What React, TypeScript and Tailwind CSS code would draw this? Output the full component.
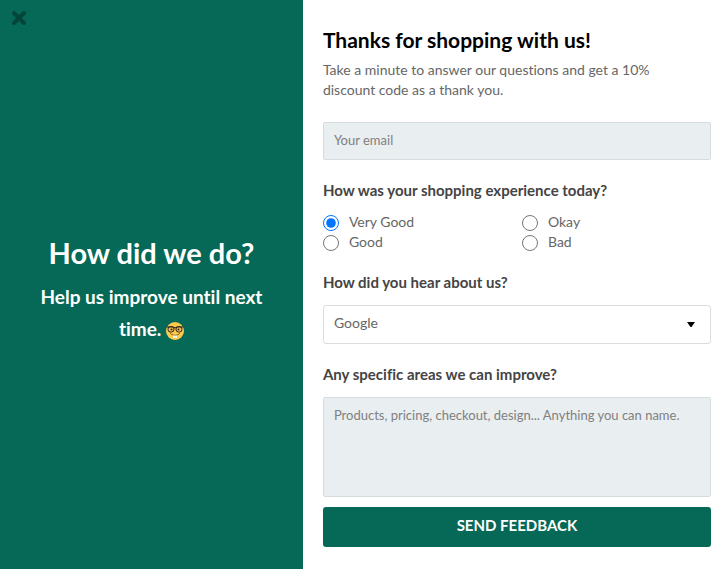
import React from "react";

const experiences = ["Very Good", "Okay", "Good", "Bad"];

function NerdFace() {
  return (
    <svg
      viewBox="0 0 36 36"
      role="img"
      aria-label="Nerd face"
      className="inline-block h-[18px] w-[18px] align-middle"
    >
      <circle cx="18" cy="18" r="18" fill="#fdca4c" />
      <path d="M9 23c5 5 13 5 18 0" fill="none" stroke="#7a4a14" strokeWidth="2" strokeLinecap="round" />
      <path d="M14 27h8v5h-8z" fill="#ffffff" />
      <path d="M18 27v5" stroke="#c9b98c" strokeWidth="1" />
      <g fill="#f0bc50" stroke="#2b2420" strokeWidth="2">
        <rect x="4" y="9" width="12" height="11" rx="5" />
        <rect x="20" y="9" width="12" height="11" rx="5" />
      </g>
      <path d="M1 10h14M21 10h14M15 12q3-2 6 0" fill="none" stroke="#2b2420" strokeWidth="2.400" />
      <circle cx="11" cy="15" r="2" fill="#3b2612" />
      <circle cx="25" cy="15" r="2" fill="#3b2612" />
    </svg>
  );
}

export default function App() {
  return (
    <main className="flex min-h-screen bg-white font-[Lato,sans-serif] text-sm text-[#666666] [font-variant-ligatures:none]">
      <aside className="relative flex w-5/12 flex-col items-center justify-center bg-[#066856] px-8 pt-2 text-center text-white">
        <button type="button" aria-label="Close" className="absolute top-2.5 left-2.5">
          <svg viewBox="0 0 18 16" className="h-4 w-[18px]" fill="none" stroke="#054539" strokeWidth="4" strokeLinecap="round">
            <path d="M4 3l10 10M14 3l-10 10" />
          </svg>
        </button>
        <h2 className="text-[29px] leading-10 font-bold">How did we do?</h2>
        <p className="mt-2 text-[19px] leading-8 font-bold">
          Help us improve until next time. <NerdFace />
        </p>
      </aside>

      <form className="w-7/12 pt-6 pr-4 pb-5 pl-5" onSubmit={(e) => e.preventDefault()}>
        <h1 className="text-[21px] leading-8 font-bold text-black">Thanks for shopping with us!</h1>
        <p className="mt-1 pr-10 leading-5">
          Take a minute to answer our questions and get a 10% discount code as a thank you.
        </p>

        <input
          type="email"
          aria-label="Your email"
          placeholder="Your email"
          className="mt-[22px] block h-[38px] w-full rounded-xs border border-[#d5dcdf] bg-[#e9eef1] px-2.5 pb-0.5 text-[13px] placeholder:text-[#808080]"
        />

        <fieldset className="mt-5">
          <legend className="text-[15px] leading-5 font-bold text-[#444444]">
            How was your shopping experience today?
          </legend>
          <div className="mt-3 grid grid-cols-2 gap-x-2.5">
            {experiences.map((name) => (
              <label key={name} className="flex h-5 items-center gap-2.5">
                <input type="radio" name="experience" defaultChecked={name === "Very Good"} className="mt-0.5 h-4 w-4" />
                {name}
              </label>
            ))}
          </div>
        </fieldset>

        <label htmlFor="source" className="mt-5 block text-[15px] leading-5 font-bold text-[#444444]">
          How did you hear about us?
        </label>
        <div className="relative mt-[13px]">
          <select
            id="source"
            className="block h-[39px] w-full appearance-none rounded-[3px] border border-[#dddddd] bg-white px-2.5 pb-1"
          >
            <option>Google</option>
          </select>
          <svg viewBox="0 0 8 5" className="pointer-events-none absolute top-[17px] right-4 h-[5px] w-2" fill="#000000">
            <path d="M0 0h8L4.500 5h-1z" />
          </svg>
        </div>

        <label htmlFor="areas" className="mt-5 block text-[15px] leading-5 font-bold text-[#444444]">
          Any specific areas we can improve?
        </label>
        <textarea
          id="areas"
          placeholder="Products, pricing, checkout, design... Anything you can name."
          className="mt-[13px] block h-[100px] w-full resize-none rounded-xs border border-[#d5dcdf] bg-[#e9eef1] px-2.5 py-2 text-[13px] leading-[18px] placeholder:text-[#808080]"
        />

        <button
          type="submit"
          className="mt-2.5 block h-10 w-full rounded-[3px] bg-[#066856] pb-0.5 text-[15px] font-bold text-white uppercase"
        >
          Send feedback
        </button>
      </form>
    </main>
  );
}
